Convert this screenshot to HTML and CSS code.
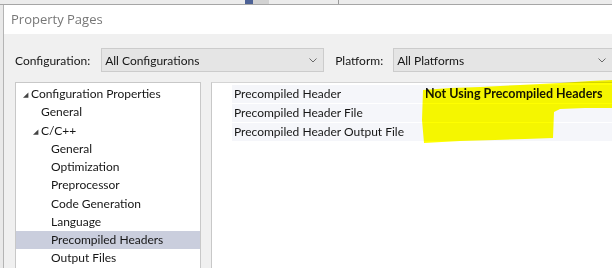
FILE: index.html
```html
<!DOCTYPE html>
<html lang="en">
<head>
    <meta charset="UTF-8">
    <title>Property Pages</title>
    <link rel="stylesheet" href="styles.css">
</head>
<body>

<div class="taskbar">
    <span class="task-blue"></span>
    <span class="task-gray"></span>
    <span class="task-split"></span>
</div>

<div class="dialog">
    <div class="titlebar">Property Pages</div>

    <div class="content">
        <div class="toolbar">
            <label class="field-label">Configuration:</label>
            <div class="combo combo-config">
                <span>All Configurations</span>
                <svg class="chevron" width="8" height="5" viewBox="0 0 8 5"><path d="M0.5 0.5 L4 4 L7.5 0.5" fill="none" stroke="#6a6a6a" stroke-width="1"/></svg>
            </div>
            <label class="field-label platform-label">Platform:</label>
            <div class="combo combo-platform">
                <span>All Platforms</span>
                <svg class="chevron" width="8" height="5" viewBox="0 0 8 5"><path d="M0.5 0.5 L4 4 L7.5 0.5" fill="none" stroke="#6a6a6a" stroke-width="1"/></svg>
            </div>
        </div>

        <div class="panes">
            <ul class="tree">
                <li class="lvl0"><span class="arrow">&#9698;</span>Configuration Properties</li>
                <li class="lvl1">General</li>
                <li class="lvl1"><span class="arrow">&#9698;</span>C/C++</li>
                <li class="lvl2">General</li>
                <li class="lvl2">Optimization</li>
                <li class="lvl2">Preprocessor</li>
                <li class="lvl2">Code Generation</li>
                <li class="lvl2">Language</li>
                <li class="lvl2 selected">Precompiled Headers</li>
                <li class="lvl2">Output Files</li>
            </ul>

            <div class="grid">
                <div class="prop-row">
                    <span class="prop-name">Precompiled Header</span>
                    <span class="prop-value">Not Using Precompiled Headers</span>
                </div>
                <div class="prop-row">
                    <span class="prop-name">Precompiled Header File</span>
                    <span class="prop-value"></span>
                </div>
                <div class="prop-row">
                    <span class="prop-name">Precompiled Header Output File</span>
                    <span class="prop-value"></span>
                </div>
            </div>
        </div>
    </div>
</div>

<!-- highlighter scribble drawn over the value column -->
<svg class="marker" width="612" height="268" viewBox="0 0 612 268">
    <polygon fill="#ffff00" points="423,90 450,88 480,87 520,85 560,83 590,81 612,80 612,108 585,108 560,109 554,112 553,138 525,139 495,140 460,141 424,143 422,120"/>
</svg>

</body>
</html>
```

FILE: styles.css
```css
body {
    margin: 0;
    padding: 0;
    width: 612px;
    height: 268px;
    overflow: hidden;
    background-color: #e9e9e9;
    font-family: Lato, "Open Sans", sans-serif;
    font-size: 12px;
    color: #161616;
}
.taskbar {
    height: 4px;
    border-bottom: 1px solid #a6a6a6;
    background-color: #ececec;
    display: flex;
}
.task-blue {
    margin-left: 245px;
    width: 8px;
    background-color: #4d6296;
}
.task-gray {
    width: 16px;
    background-color: #d2d2d2;
}
.task-split {
    margin-left: 69px;
    width: 1px;
    background-color: #9a9a9a;
}
.dialog {
    margin-left: 3px;
    border-left: 1px solid #b4b4b4;
    height: 263px;
    background-color: #f0f0f0;
}
.titlebar {
    height: 29px;
    background-color: white;
    color: #777777;
    font-family: "Open Sans", sans-serif;
    font-size: 13px;
    line-height: 29px;
    padding-left: 7px;
}
.content {
    padding: 14px 0 0 11px;
}
.toolbar {
    display: flex;
    align-items: center;
    height: 24px;
    white-space: nowrap;
}
.combo {
    height: 22px;
    border: 1px solid #cccccc;
    background-color: #e5e5e5;
    display: flex;
    align-items: center;
    justify-content: space-between;
    padding: 0 6px 0 3px;
    flex-shrink: 0;
}
.combo-config {
    margin-left: 11px;
    width: 212px;
}
.platform-label {
    margin-left: 11px;
}
.combo-platform {
    margin-left: 10px;
    width: 209px;
}
.chevron {
    display: block;
}
.panes {
    display: flex;
    margin-top: 10px;
    gap: 10px;
}
.tree {
    list-style: none;
    margin: 0;
    padding: 2px 0 0 0;
    width: 184px;
    height: 190px;
    flex-shrink: 0;
    background-color: white;
    border: 1px solid #c8c8c8;
}
.tree li {
    height: 18.25px;
    line-height: 18px;
    white-space: nowrap;
}
.tree .arrow {
    display: inline-block;
    width: 8px;
    font-size: 7px;
    margin-left: -8px;
    color: #444;
    vertical-align: 1px;
}
.lvl0 {
    padding-left: 15px;
}
.lvl1 {
    padding-left: 25px;
}
.lvl2 {
    padding-left: 35px;
}
.tree .selected {
    background-color: #cacedd;
}
.grid {
    flex: 1;
    height: 190px;
    background-color: white;
    border-top: 1px solid #d4d4d4;
    border-left: 1px solid #c8c8c8;
    padding-top: 2px;
}
.prop-row {
    display: flex;
    height: 18px;
    line-height: 18px;
    margin-left: 20px;
    background-color: #f5f6fa;
    border-bottom: 1px solid #ffffff;
    white-space: nowrap;
}
.prop-name {
    width: 189px;
    padding-left: 2px;
}
.prop-value {
    flex: 1;
    font-weight: bold;
    font-size: 12.5px;
    padding-left: 2px;
}
.marker {
    position: absolute;
    left: 0;
    top: 0;
    mix-blend-mode: multiply;
    pointer-events: none;
}
```
